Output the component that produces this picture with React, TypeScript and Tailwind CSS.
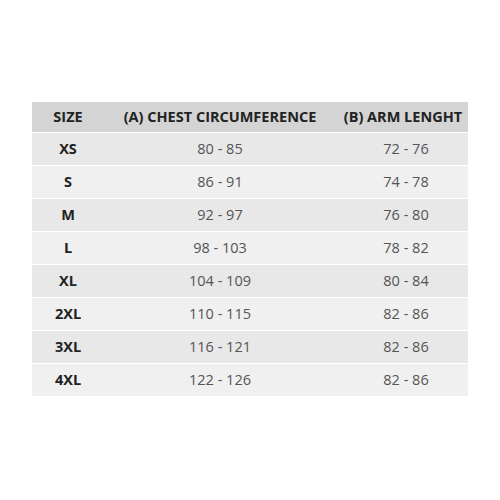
import React from "react";

const rows = [
  ["XS", "80 - 85", "72 - 76"],
  ["S", "86 - 91", "74 - 78"],
  ["M", "92 - 97", "76 - 80"],
  ["L", "98 - 103", "78 - 82"],
  ["XL", "104 - 109", "80 - 84"],
  ["2XL", "110 - 115", "82 - 86"],
  ["3XL", "116 - 121", "82 - 86"],
  ["4XL", "122 - 126", "82 - 86"],
];

export default function App() {
  return (
    <div
      className="w-[500px] h-[500px] bg-white pt-[102px] pl-[32px]"
      style={{ fontFamily: '"Open Sans", sans-serif' }}
    >
      <div className="w-[436px] flex flex-col">
        <div className="grid grid-cols-[72px_232px_132px] h-[30px] items-center bg-[#d4d4d4] text-[14.5px] font-bold text-[#222] uppercase">
          <div className="text-center">Size</div>
          <div className="text-center">(A) Chest circumference</div>
          <div className="text-center pl-[2px]">(B) Arm lenght</div>
        </div>
        {rows.map((r, i) => (
          <div
            key={r[0]}
            className={
              "grid grid-cols-[72px_232px_132px] h-[33px] items-center border-t border-white text-[14.5px] " +
              (i % 2 === 0 ? "bg-[#e8e8e8]" : "bg-[#f0f0f0]")
            }
          >
            <div className="text-center font-bold text-[#222]">{r[0]}</div>
            <div className="text-center text-[#555]">{r[1]}</div>
            <div className="text-center text-[#555] pl-[8px]">{r[2]}</div>
          </div>
        ))}
      </div>
    </div>
  );
}
